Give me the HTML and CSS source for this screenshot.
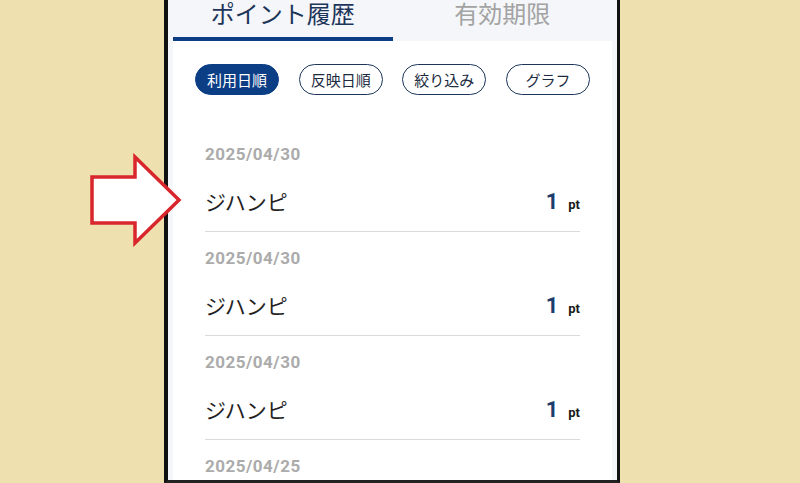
FILE: index.html
```html
<!DOCTYPE html>
<html>
<head>
  <title>ポイント履歴</title>
  <link rel="stylesheet" href="styles.css">
</head>
<body>
  <div class="stage">
    <!-- red annotation arrow pointing at the first row -->
    <svg class="pointer" width="95" height="94" viewBox="0 0 95 94">
      <polygon points="4,24 47,24 47,4 91,47 47,90 47,70 4,70" fill="#ffffff" stroke="#d8262c" stroke-width="3.5" stroke-linejoin="miter"/>
    </svg>

    <div class="phone">
      <div class="tabs">
        <div class="tab active">ポイント履歴</div>
        <div class="tab">有効期限</div>
      </div>

      <div class="card">
        <div class="sorts">
          <button class="chip selected">利用日順</button>
          <button class="chip">反映日順</button>
          <button class="chip">絞り込み</button>
          <button class="chip">グラフ</button>
        </div>

        <ul class="history">
          <li class="entry">
            <div class="entry-date">2025/04/30</div>
            <div class="entry-body">
              <span class="entry-name">ジハンピ</span>
              <span class="entry-points">1<small>pt</small></span>
            </div>
          </li>
          <li class="entry">
            <div class="entry-date">2025/04/30</div>
            <div class="entry-body">
              <span class="entry-name">ジハンピ</span>
              <span class="entry-points">1<small>pt</small></span>
            </div>
          </li>
          <li class="entry">
            <div class="entry-date">2025/04/30</div>
            <div class="entry-body">
              <span class="entry-name">ジハンピ</span>
              <span class="entry-points">1<small>pt</small></span>
            </div>
          </li>
          <li class="entry">
            <div class="entry-date">2025/04/25</div>
            <div class="entry-body">
              <span class="entry-name">ジハンピ</span>
              <span class="entry-points">1<small>pt</small></span>
            </div>
          </li>
        </ul>
      </div>
    </div>
  </div>
</body>
</html>
```

FILE: styles.css
```css
body {
  margin: 0;
  background-color: #efe1af;
  font-family: "Noto Sans CJK JP", "Noto Sans", sans-serif;
}
.stage {
  position: relative;
  height: 483px;
  overflow: hidden;
  padding-left: 164px;
}

/* Annotation arrow */
.pointer {
  position: absolute;
  left: 88px;
  top: 153px;
  z-index: 2;
}

/* Phone frame */
.phone {
  width: 439px;
  height: 480px;
  padding: 0 5px;
  background-color: #f4f6f9;
  border-left: 4px solid #111;
  border-right: 3px solid #111;
  border-bottom: 3px solid #222;
  overflow: hidden;
}

/* Tabs */
.tabs {
  display: flex;
}
.tab {
  flex: 1;
  text-align: center;
  font-size: 24px;
  line-height: 24px;
  padding-top: 1px;
  padding-bottom: 12px;
  color: #a3a3a3;
  border-bottom: 4px solid transparent;
}
.tab.active {
  color: #1c3559;
  border-bottom-color: #0c3e86;
}

/* Card */
.card {
  background-color: #ffffff;
  padding: 23px 22px 0;
  height: 100%;
}
.sorts {
  display: flex;
  justify-content: space-between;
}
.chip {
  width: 84px;
  height: 31px;
  padding: 0;
  border: 1.5px solid #1c3559;
  border-radius: 16px;
  background-color: #ffffff;
  color: #1c2b40;
  font-family: "Noto Sans CJK JP", sans-serif;
  font-size: 15px;
  font-weight: 400;
}
.chip.selected {
  background-color: #0c3e86;
  border-color: #0c3e86;
  color: #ffffff;
}

/* History list */
.history {
  list-style: none;
  margin: 33px 0 0;
  padding: 0 10px;
}
.entry {
  padding: 16px 0 15px;
  border-bottom: 1.5px solid #dadada;
}
.entry-date {
  font-family: Roboto, sans-serif;
  font-weight: bold;
  font-size: 17px;
  line-height: 20px;
  letter-spacing: 0.5px;
  color: #ababab;
}
.entry-body {
  display: flex;
  justify-content: space-between;
  align-items: flex-start;
  margin-top: 22px;
}
.entry-name {
  font-size: 21px;
  line-height: 30px;
  color: #222;
}
.entry-points {
  padding-top: 5px;
  font-family: Roboto, sans-serif;
  font-weight: bold;
  font-size: 22px;
  line-height: 22px;
  color: #1e3d6c;
}
.entry-points small {
  margin-left: 10px;
  font-size: 13px;
  color: #1a1a1a;
}
```
